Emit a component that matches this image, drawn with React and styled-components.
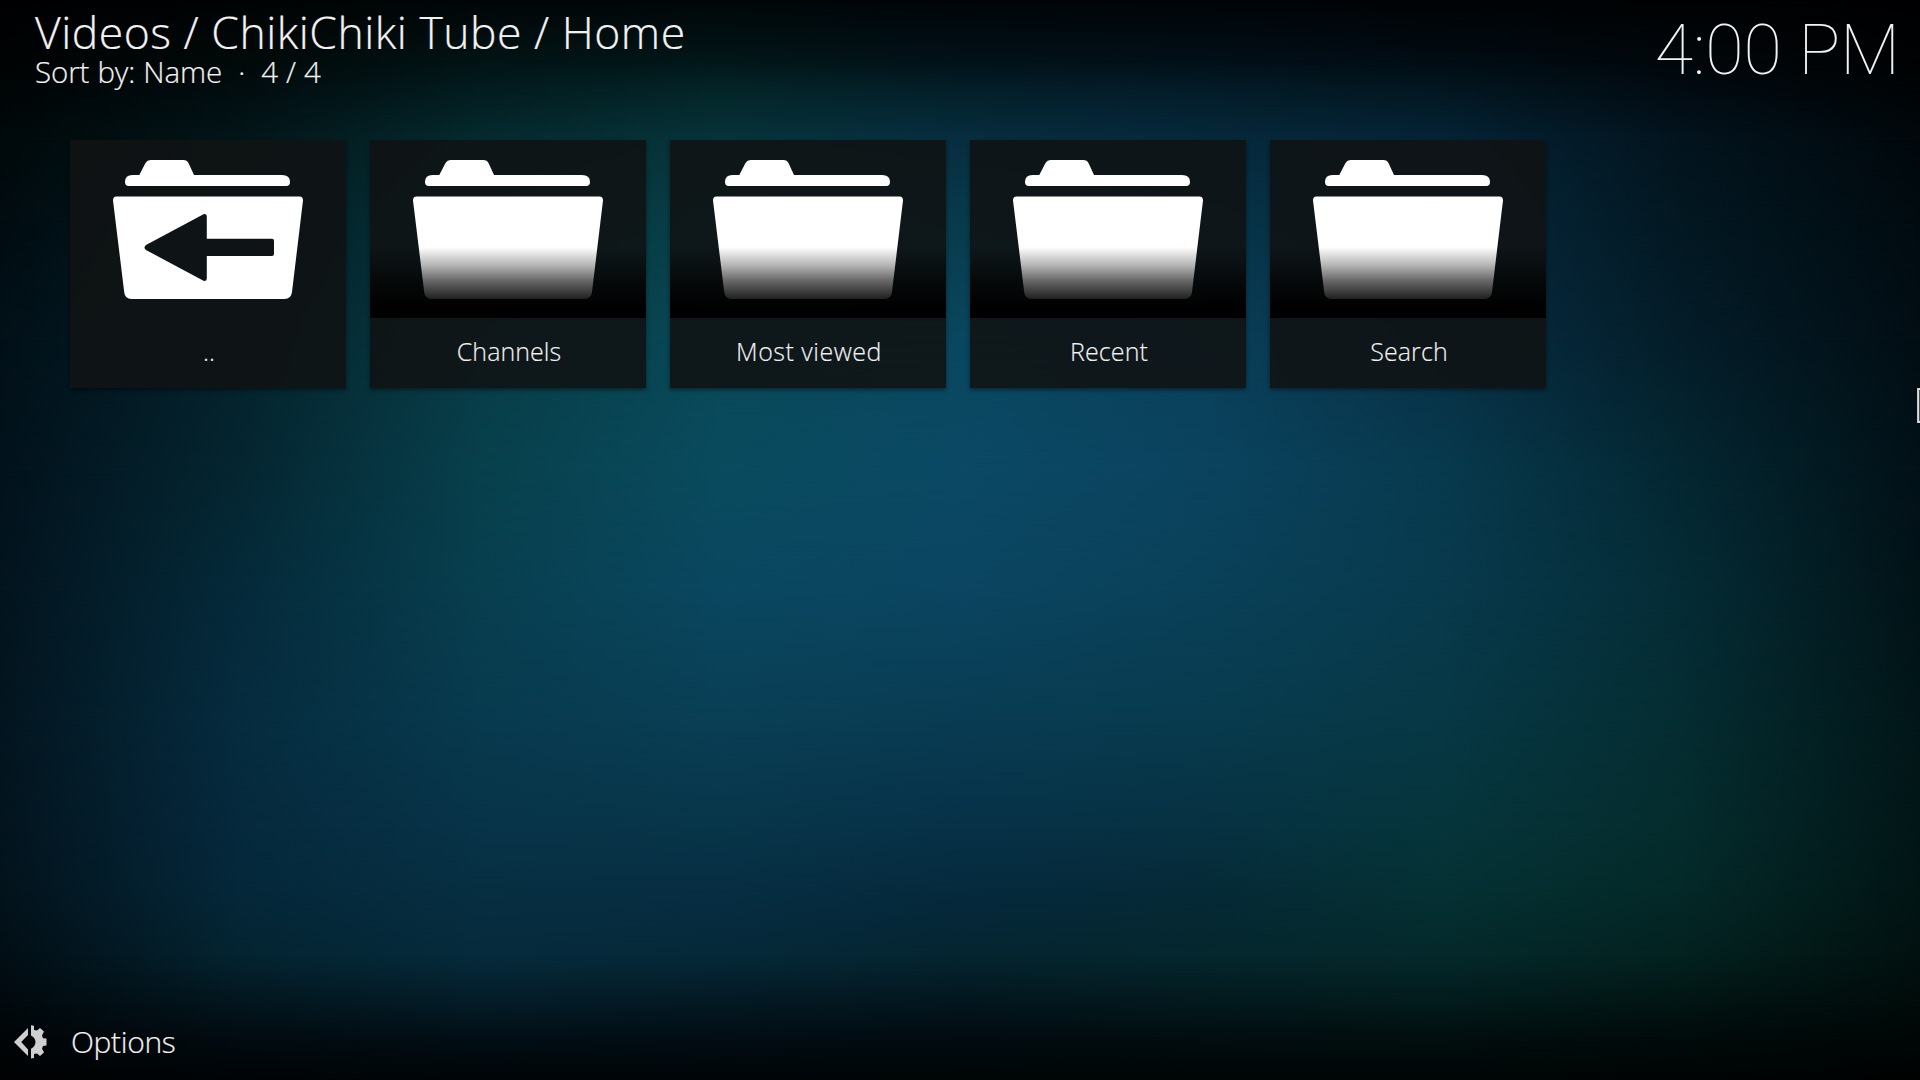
import React from "react";
import styled, { createGlobalStyle } from "styled-components";

const GlobalStyle = createGlobalStyle`
  html, body { margin: 0; background: #000; overflow: hidden; }
  * { box-sizing: border-box; }
`;

const Screen = styled.main`
  position: relative;
  isolation: isolate;
  width: 1920px;
  height: 1080px;
  overflow: hidden;
  display: flex;
  flex-direction: column;
  color: #f2f2f2;
  font-family: "Open Sans", "Noto Sans", sans-serif;
  font-weight: 300;
`;

const Backdrop = styled.div`
  position: absolute;
  inset: 0;
  z-index: -1;
  background: #000;
`;

/* Each band fades in between its two stops and stays solid below them,
   so the stack blends smoothly from one colour row to the next. */
const Band = styled.div`
  position: absolute;
  inset: 0;
  background: linear-gradient(to right, ${(p) => p.$colors.join(", ")});
  mask-image: linear-gradient(to bottom, transparent ${(p) => p.$from}px, #000 ${(p) => p.$to}px);
`;

const bands = [
  [0, ["#000102", "#000303", "#000607", "#000608", "#000508", "#000407", "#000305", "#000203", "#000102"]],
  [60, ["#000304", "#010909", "#021314", "#021618", "#021118", "#020f18", "#010c13", "#01070b", "#000203"]],
  [90, ["#000506", "#020d10", "#031c1f", "#042528", "#041f29", "#041c28", "#031721", "#020b12", "#000406"]],
  [140, ["#00090b", "#031619", "#052b2f", "#07343b", "#072e40", "#06293c", "#052437", "#03141e", "#01080c"]],
  [220, ["#010c11", "#031d23", "#06333a", "#084048", "#083b4b", "#073549", "#06293e", "#031822", "#010b10"]],
  [340, ["#021018", "#04222b", "#083c46", "#094958", "#0a4760", "#0a405a", "#082f45", "#041d29", "#020e14"]],
  [470, ["#02121c", "#052631", "#08404c", "#0a4b5e", "#0b4964", "#0b435f", "#083a4e", "#042732", "#021117"]],
  [590, ["#03141e", "#052a3a", "#083f4f", "#0a4760", "#0b4561", "#0a4159", "#083a4d", "#052c36", "#021317"]],
  [720, ["#03151f", "#062c3f", "#083a4e", "#0a3f55", "#093c53", "#083b4e", "#073845", "#052d32", "#021618"]],
  [830, ["#03141e", "#06293d", "#083348", "#083549", "#073147", "#073142", "#06353b", "#052c2d", "#021617"]],
  [890, ["#03131c", "#05283a", "#072f42", "#072e43", "#062a3e", "#062a37", "#053134", "#042928", "#021515"]],
  [955, ["#020e15", "#042431", "#062b3c", "#062939", "#052530", "#05272e", "#05292b", "#032220", "#021110"]],
  [1005, ["#01090d", "#03151d", "#041b26", "#041822", "#03151d", "#03181c", "#031a1b", "#021413", "#010b0a"]],
  [1040, ["#010507", "#020b10", "#020e15", "#020d14", "#020b10", "#020d0f", "#020e0f", "#010a0a", "#000606"]],
  [1080, ["#000203", "#000406", "#000507", "#000507", "#000506", "#000505", "#000505", "#000404", "#000202"]],
];

const Header = styled.header`
  display: flex;
  justify-content: space-between;
  height: 140px;
  padding: 0 20px 0 35px;
`;

const Headings = styled.div`
  display: flex;
  flex-direction: column;
  padding-top: 7px;
  -webkit-text-stroke: 0.2px currentColor;
`;

const Title = styled.h1`
  margin: 0;
  font-size: 44.5px;
  line-height: 50px;
  letter-spacing: 0.5px;
  font-weight: 300;
  white-space: pre;
`;

const Subtitle = styled.p`
  margin: 0;
  font-size: 29.5px;
  line-height: 30px;
  letter-spacing: -0.1px;
  word-spacing: 0.5px;
  white-space: pre;
`;

const Clock = styled.time`
  padding-top: 9px;
  font-family: Roboto, sans-serif;
  font-weight: 100;
  font-size: 70px;
  line-height: 82px;
  letter-spacing: -0.15px;
  white-space: pre;
`;

const Grid = styled.section`
  display: flex;
  gap: 24px;
  padding-left: 70px;
  flex: 1;
  align-items: flex-start;
`;

const Card = styled.article`
  width: 276px;
  height: 248px;
  display: flex;
  flex-direction: column;
  background: rgba(16, 19, 20, 0.9);
  box-shadow: 0 2px 4px rgba(0, 0, 0, 0.45);
`;

const Thumb = styled.div`
  height: 178px;
  display: grid;
  > * { grid-area: 1 / 1; }
`;

const Shade = styled.div`
  background: linear-gradient(to bottom, rgba(0, 0, 0, 0) 107px, rgba(0, 0, 0, 0.27) 124px, rgba(0, 0, 0, 0.6) 141px, rgba(0, 0, 0, 0.86) 158px, #000 170px);
`;

const Label = styled.div`
  height: 70px;
  padding: 16px 0 0 2px;
  text-align: center;
  font-size: 25px;
  line-height: 34px;
  letter-spacing: ${(p) => p.$tracking}px;
  -webkit-text-stroke: 0.15px currentColor;
`;

const Footer = styled.footer`
  display: flex;
  align-items: center;
  height: 76px;
  padding-left: 13px;
  gap: 24px;
`;

const OptionsLabel = styled.span`
  font-size: 30px;
  line-height: 40px;
  letter-spacing: -0.35px;
  -webkit-text-stroke: 0.2px currentColor;
`;

const Pointer = styled.svg`
  position: absolute;
  left: 1916px;
  top: 387px;
`;

function Folder({ back }) {
  return (
    <svg width="276" height="178" viewBox="0 0 276 178" fill="#fff">
      <path d="M58 46 Q55 45.500 55 42 Q55 35 62.500 35 H69.300 L75.500 23 Q77.300 20 80.500 20 H113.500 Q117 20 118.500 23 L124 35 H212 Q220 35 220 42 Q220 45.500 217 46 Z" />
      <path
        fillRule="evenodd"
        d={
          "M46.500 56.500 H229.500 Q233.200 56.800 233 60.500 L222 152 Q221.200 159 214.500 159 H61.500 Q54.800 159 54.200 152 L43 60.500 Q42.800 56.800 46.500 56.500 Z" +
          (back
            ? " M133.500 74.200 L76 105 Q73 107.500 76 110 L133.500 140.800 Q136.800 141.500 136.800 138 V116 H202 Q204 116 204 114 V101 Q204 98.800 202 98.800 H136.800 V77 Q136.800 73.300 133.500 74.200 Z"
            : "")
        }
      />
    </svg>
  );
}

function OptionsIcon() {
  return (
    <svg width="34" height="36" viewBox="0 0 34 36" fill="#cfcfcf">
      <path d="M15 4 V11 L8.200 18 L15 25.500 V32 L1 18 Z" />
      <path d="M18 1.300 L21 1.800 V6 L24 6.500 L27 4 L31 7.500 L29 11.500 L30 14.300 L33.500 14.500 V21.500 L30 22 L29 24.500 L31 28.500 L27 32 L24 29.500 L21 30 V34 L18 34.500 V24.800 Q22.300 22.500 22.500 18 Q22.300 13.500 18 11.500 Z" />
    </svg>
  );
}

const items = [
  { name: "..", tracking: 0 },
  { name: "Channels", tracking: 0.05 },
  { name: "Most viewed", tracking: 0.5 },
  { name: "Recent", tracking: 0.1 },
  { name: "Search", tracking: 0.1 },
];

export default function App() {
  return (
    <Screen>
      <GlobalStyle />
      <Backdrop>
        {bands.map(([y, colors], i) => (
          <Band key={y} $colors={colors} $from={i ? bands[i - 1][0] : -1} $to={y} />
        ))}
      </Backdrop>
      <Header>
        <Headings>
          <Title>Videos / ChikiChiki Tube / Home</Title>
          <Subtitle>{"Sort by: Name  ·  4 / 4"}</Subtitle>
        </Headings>
        <Clock>4:00 PM</Clock>
      </Header>
      <Grid>
        {items.map(({ name, tracking }, i) => (
          <Card key={name}>
            <Thumb>
              <Folder back={i === 0} />
              {i > 0 && <Shade />}
            </Thumb>
            <Label $tracking={tracking}>{name}</Label>
          </Card>
        ))}
      </Grid>
      <Footer>
        <OptionsIcon />
        <OptionsLabel>Options</OptionsLabel>
      </Footer>
      <Pointer width="4" height="38" viewBox="0 0 4 38" fill="none">
        <path d="M4 2 H2.200 V35 H4" stroke="#ddd" strokeWidth="2.2" />
      </Pointer>
    </Screen>
  );
}
